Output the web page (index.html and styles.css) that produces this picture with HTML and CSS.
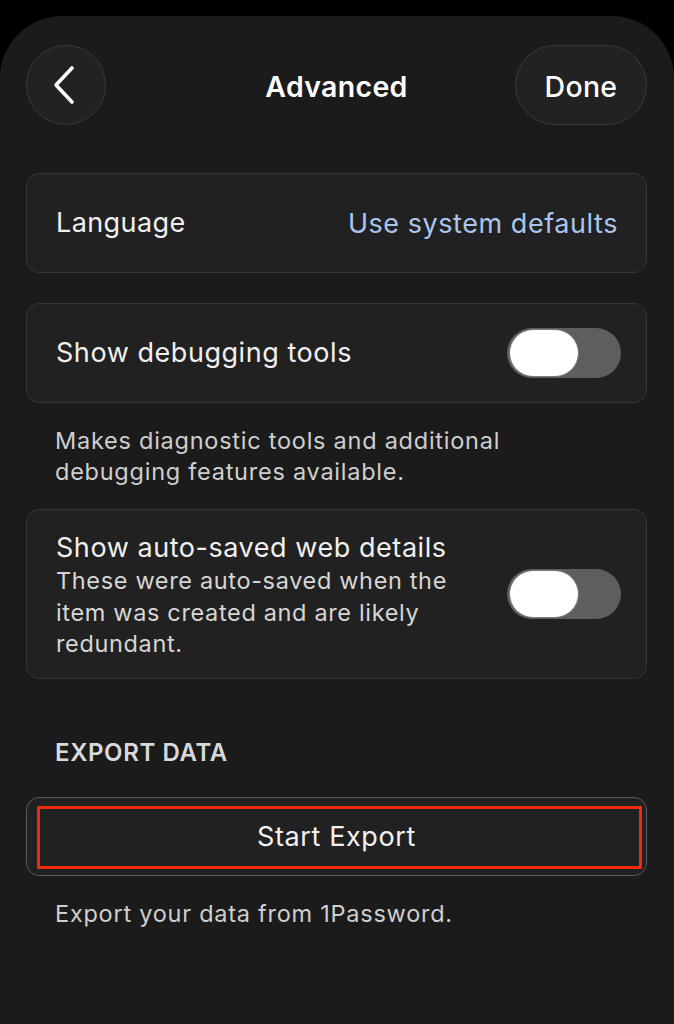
FILE: index.html
```html
<!DOCTYPE html>
<html lang="en">
<head>
<meta charset="utf-8">
<title>Advanced</title>
<link rel="stylesheet" href="styles.css">
</head>
<body>
<div class="sheet">
  <header class="header">
    <button class="back" aria-label="Back">
      <svg width="24" height="40" viewBox="0 0 24 40"><path d="M20 3 L4 20 L20 37" fill="none" stroke="#fff" stroke-width="3.6" stroke-linecap="round" stroke-linejoin="round"/></svg>
    </button>
    <h1 class="title">Advanced</h1>
    <button class="done">Done</button>
  </header>

  <main class="content">
    <div class="card row lang">
      <span class="label">Language</span>
      <span class="value">Use system defaults</span>
    </div>

    <div class="card row debug">
      <span class="label">Show debugging tools</span>
      <span class="toggle"><span class="knob"></span></span>
    </div>
    <p class="note">Makes diagnostic tools and additional debugging features available.</p>

    <div class="card row autosave">
      <div class="texts">
        <div class="label">Show auto-saved web details</div>
        <div class="sub">These were auto-saved when the item was created and are likely redundant.</div>
      </div>
      <span class="toggle"><span class="knob"></span></span>
    </div>

    <h2 class="section">EXPORT DATA</h2>
    <button class="export">Start Export<span class="highlight"></span></button>
    <p class="note foot">Export your data from 1Password.</p>
  </main>
</div>
</body>
</html>
```

FILE: styles.css
```css
* { box-sizing: border-box; }
html, body { margin: 0; padding: 0; background: #000; }
body {
  width: 674px;
  height: 1024px;
  overflow: hidden;
  font-family: Inter, "Noto Sans", "Liberation Sans", sans-serif;
  color: #f2f2f2;
}
.sheet {
  margin-top: 16px;
  height: 1008px;
  background: #1b1b1b;
  border-radius: 62px 62px 0 0;
  padding: 29px 27px 0 26px;
}
.header {
  display: flex;
  align-items: center;
  justify-content: space-between;
  height: 80px;
}
.back, .done {
  height: 80px;
  background: #222222;
  border: 1.5px solid #3a3a3a;
  color: #fff;
  font-family: inherit;
  padding: 0;
  display: flex;
  align-items: center;
  justify-content: center;
}
.back {
  width: 80px;
  border-radius: 50%;
  padding-right: 4px;
}
.done {
  width: 132px;
  border-radius: 40px;
  font-size: 28.5px;
  font-weight: 500;
  letter-spacing: 0.3px;
  padding-top: 2px;
}
.title {
  margin: 0;
  font-size: 28.5px;
  font-weight: 600;
  letter-spacing: 0.3px;
  color: #fff;
  padding-left: 52px;
  padding-top: 2px;
}
.content {
  display: flex;
  flex-direction: column;
  padding-top: 48px;
}
.card {
  background: #212121;
  border: 1.5px solid #363636;
  border-radius: 13px;
}
.row {
  display: flex;
  align-items: center;
  justify-content: space-between;
  padding: 0 25px 0 29px;
}
.lang, .debug { height: 100px; }
.debug { margin-top: 30px; }
.label {
  font-size: 27px;
  line-height: 32px;
  letter-spacing: 0.55px;
  color: #f0f0f0;
}
.lang .label { letter-spacing: 0.4px; }
.value {
  font-size: 27px;
  letter-spacing: 0.55px;
  color: #aac5ee;
  padding-right: 3px;
}
.toggle {
  width: 114px;
  height: 50px;
  border-radius: 25px;
  background: #5e5e5e;
  padding: 2px 43px 2px 3px;
  flex: none;
}
.knob {
  display: block;
  width: 68px;
  height: 46px;
  border-radius: 23px;
  background: #fff;
  box-shadow: 0 0 0 1px #7a7a7a;
}
.note {
  margin: 22px 0 0 29px;
  font-size: 23.5px;
  line-height: 31px;
  letter-spacing: 0.75px;
  color: #cfcfcf;
  max-width: 470px;
}
.autosave {
  margin-top: 22px;
  height: 170px;
  padding-top: 22px;
  padding-bottom: 20px;
  align-items: flex-start;
}
.autosave .toggle { margin-top: 37px; }
.texts { width: 430px; }
.sub {
  font-size: 23.5px;
  line-height: 31.5px;
  letter-spacing: 0.65px;
  color: #d6d6d6;
  margin-top: 1px;
  width: 405px;
}
.section {
  margin: 60px 0 0 29px;
  font-size: 24px;
  line-height: 28px;
  font-weight: 600;
  color: #d9d9d9;
  letter-spacing: 0.6px;
}
.export {
  position: relative;
  margin-top: 30px;
  height: 79px;
  width: 100%;
  background: #212121;
  border: 1.5px solid #5a5a5a;
  border-radius: 13px;
  color: #f2f2f2;
  font-family: inherit;
  font-size: 27px;
  letter-spacing: 0.6px;
}
.highlight {
  position: absolute;
  left: 10px;
  right: 4px;
  top: 8px;
  bottom: 6px;
  border: 3px solid #f02a0c;
  pointer-events: none;
}
.foot { margin-top: 22px; }
```
